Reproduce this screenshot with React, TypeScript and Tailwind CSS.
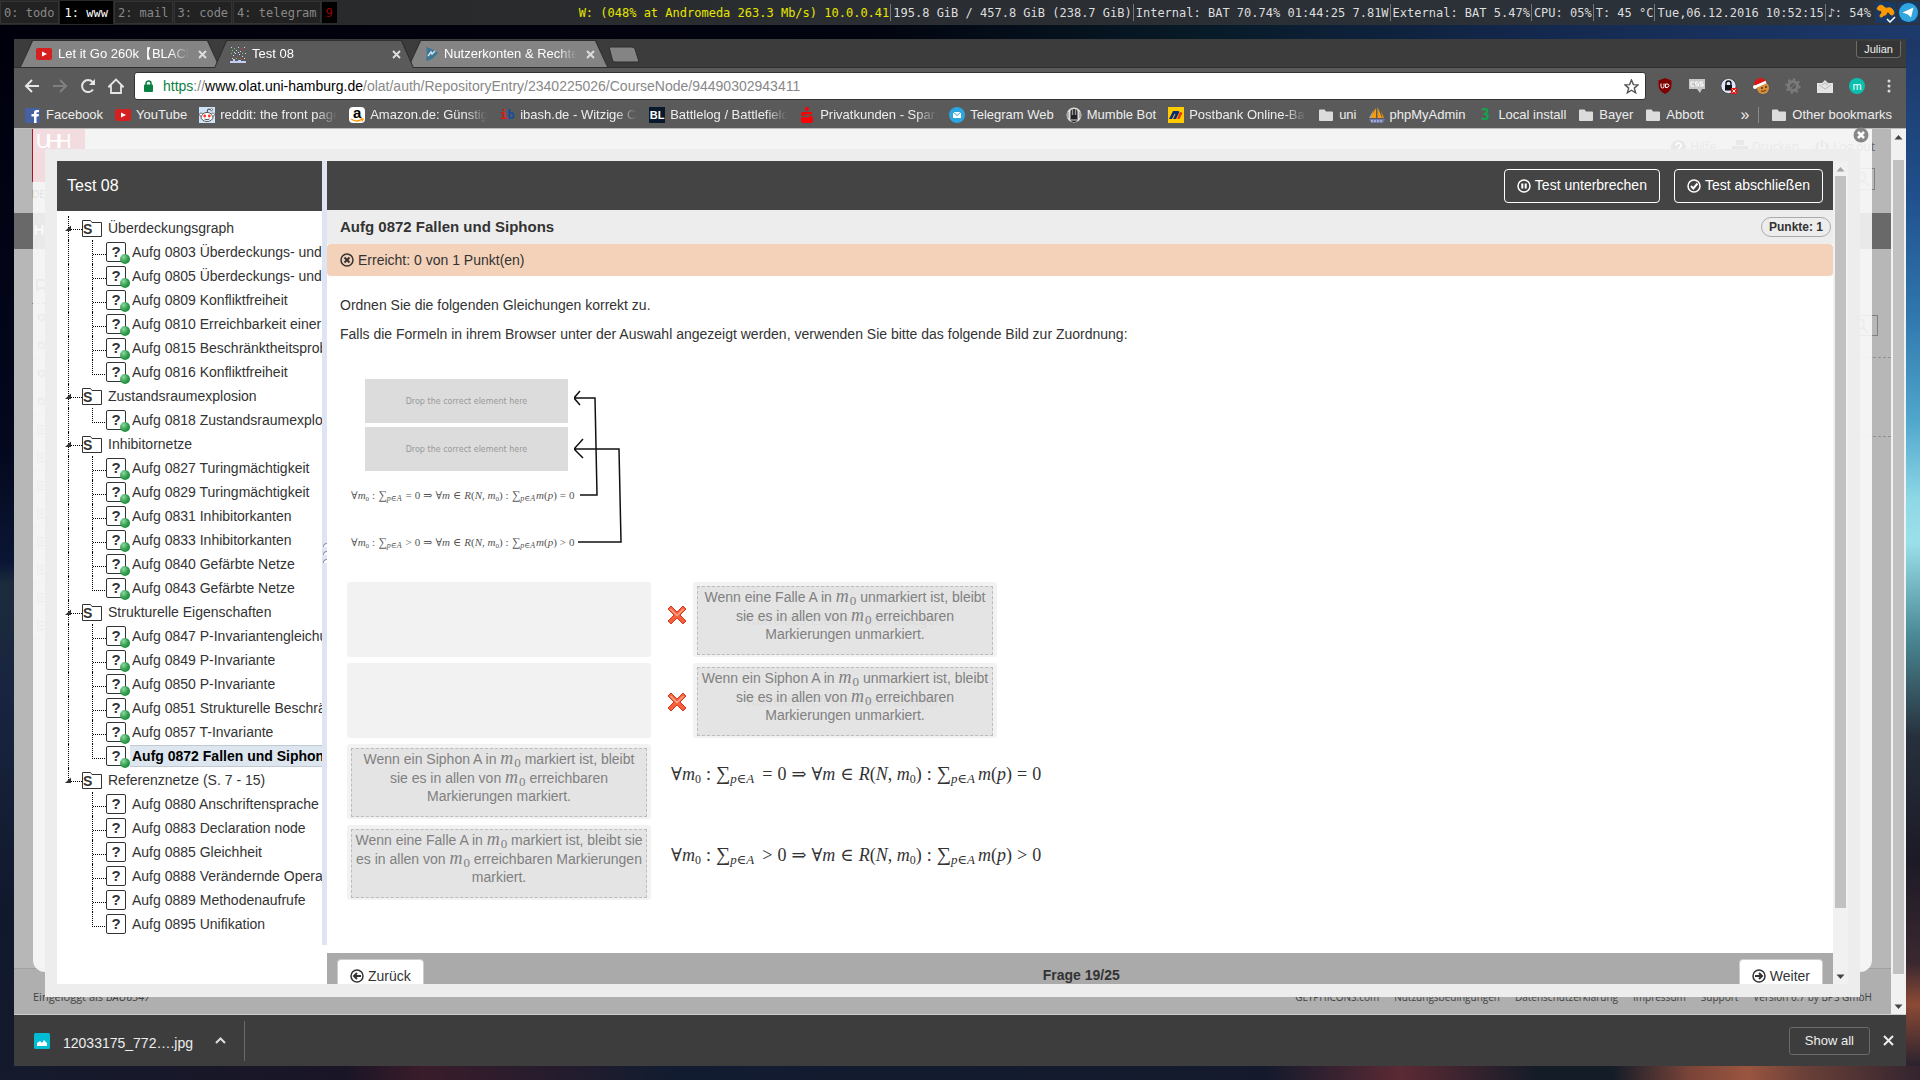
import React from "react";

const SANS = "font-['Liberation_Sans',Arial,sans-serif]";
const MONO = "font-['DejaVu_Sans_Mono',monospace]";

/* ---------- status bar ---------- */

const workspaces = [
  { label: "0: todo", active: false },
  { label: "1: www", active: true },
  { label: "2: mail", active: false },
  { label: "3: code", active: false },
  { label: "4: telegram", active: false },
];

const status = [
  "195.8 GiB / 457.8 GiB (238.7 GiB)",
  "Internal: BAT 70.74% 01:44:25 7.81W",
  "External: BAT 5.47%",
  "CPU: 05%",
  "T: 45 °C",
  "Tue,06.12.2016 10:52:15",
  "♪: 54%",
];

function StatusBar() {
  return (
    <header className={`${MONO} flex h-[25px] shrink-0 items-center justify-between bg-linear-to-r from-[#282828] to-[#2c333c] text-[12px] whitespace-pre`}>
      <nav className="flex h-full items-center gap-px">
        {workspaces.map((w) => (
          <button
            key={w.label}
            className={
              w.active
                ? "h-[23px] border border-black bg-black px-[4px] text-white"
                : "h-[23px] border border-[#333] bg-[#222] px-[3px] text-[#888]"
            }
          >
            {w.label}
          </button>
        ))}
        <button className="h-[21px] bg-black px-[4px] text-[#900]">9</button>
      </nav>
      <div className="flex h-full items-center pr-px text-[#ddd]">
        <span className="pr-px text-[#e6e600]">W: (048% at Andromeda 263.3 Mb/s) 10.0.0.41</span>
        {status.map((s) => (
          <span key={s} className="flex h-[17px] items-center border-l border-[#777] pr-px pl-[2px]">
            {s}
          </span>
        ))}
        <svg className="ml-[3px] bg-[#1a3a66]" width="21" height="21" viewBox="0 0 21 21">
          <path d="M2 7c1-4 5-5 7-2 3 3 5-1 8 2 3 3 2 6 0 6-3 0-2-3-4-3s-1 4-4 3c-1 2-4 3-4 1s2-2 2-4-3-1-5-3z" fill="#f90" stroke="#f90" />
          <path d="M12 17l3 3 5-5" fill="none" stroke="#fff" strokeWidth="1.5" />
        </svg>
        <svg className="ml-[2px]" width="21" height="21" viewBox="0 0 21 21">
          <rect width="21" height="21" fill="#1a3a66" />
          <circle cx="10.500" cy="10.500" r="9.500" fill="#31a5dd" />
          <path d="M4.500 10.500L15.500 5.500 13 15.500 10 12.500z" fill="#fff" />
        </svg>
      </div>
    </header>
  );
}

/* ---------- browser chrome ---------- */

function YouTubeIcon() {
  return (
    <svg width="16" height="16" viewBox="0 0 16 16" className="shrink-0">
      <rect y="2" width="16" height="12" rx="2" fill="#d6201f" />
      <path d="M6 5.500v5L11 8z" fill="#fff" />
    </svg>
  );
}

function TestIcon() {
  const dots = "1,1 4,2 8,1 11,2 14,1 2,4 6,4 10,5 13,4 1,7 5,7 9,8 3,9 7,10 12,10 15,7 2,12 6,12 10,12 14,12 4,6 12,7 8,6".split(" ");
  return (
    <svg width="16" height="17" viewBox="0 0 16 17" className="shrink-0">
      {dots.map((d, i) => {
        const [x, y] = d.split(",");
        return <rect key={d} x={x} y={y} width="1" height="1" fill={i % 5 === 3 ? "#e33" : i % 4 === 1 ? "#5d7" : "#ccd4ff"} />;
      })}
      <path d="M0 15h3v-2h2v2h3v-1h3v1h5v2H0z" fill="#c6cdf2" />
    </svg>
  );
}

function RsIcon() {
  return (
    <svg width="14" height="14" viewBox="0 0 14 14" className="shrink-0">
      <path d="M2 0c1 3 1 9 0 14 5-1 9-4 12-8C10 3 6 1 2 0z" fill="#3b7695" />
      <path d="M4 9l3-4 1 2 3-3" fill="none" stroke="#cfe3ee" strokeWidth="1.500" />
    </svg>
  );
}

function Tab({ title, icon, active }: { title: string; icon: React.ReactNode; active?: boolean }) {
  return (
    <div className={active ? "relative z-10 -mr-[6px] flex w-[200px] items-center" : "relative -mr-[6px] flex w-[200px] items-center"}>
      <span className="absolute inset-0 bg-[#2f2f2f] [clip-path:polygon(12px_0,calc(100%-12px)_0,100%_100%,0_100%)]" />
      <span
        className={
          active
            ? "absolute inset-x-px top-px bottom-0 bg-[#5a5a5a] [clip-path:polygon(12px_0,calc(100%-12px)_0,100%_100%,0_100%)]"
            : "absolute inset-x-px top-px bottom-px bg-[#848484] [clip-path:polygon(12px_0,calc(100%-12px)_0,100%_100%,0_100%)]"
        }
      />
      <div className="relative flex w-full items-center pr-[11px] pl-[16px]">
        {icon}
        <span className="ml-[6px] flex-1 overflow-hidden text-[13px] leading-4 whitespace-nowrap text-white [mask-image:linear-gradient(90deg,#000_85%,transparent)]">
          {title}
        </span>
        <button aria-label="Tab schließen" className="ml-[6px] flex size-[14px] items-center justify-center">
          <svg width="9" height="9" viewBox="0 0 9 9" stroke="#ddd" strokeWidth="2">
            <path d="M1 1l7 7M8 1l-7 7" />
          </svg>
        </button>
      </div>
    </div>
  );
}

function Folder() {
  return (
    <svg width="14" height="12" viewBox="0 0 14 12" className="mx-px shrink-0" fill="#dcdcdc">
      <path d="M0 1.500Q0 .500 1 .500h4.500L7 2.500h6q1 0 1 1V11q0 1-1 1H1q-1 0-1-1z" />
    </svg>
  );
}

const icons: Record<string, React.ReactNode> = {
  fb: (
    <svg width="16" height="16" viewBox="0 0 16 16">
      <rect y="1" width="15" height="15" fill="#4561a3" />
      <path d="M9 16V9.500H6.500V7H9V5.500Q9 3 11.500 3H14v2.300h-1.500q-1 0-1 1V7H14l-.400 2.500h-2.100V16z" fill="#fff" />
    </svg>
  ),
  yt: <YouTubeIcon />,
  reddit: (
    <svg width="16" height="16" viewBox="0 0 16 16">
      <rect width="16" height="16" fill="#cee3f8" />
      <ellipse cx="8" cy="10" rx="6" ry="4.500" fill="#fff" stroke="#333" strokeWidth=".800" />
      <circle cx="2" cy="7.500" r="1.500" fill="#fff" stroke="#333" strokeWidth=".600" />
      <circle cx="14" cy="7.500" r="1.500" fill="#fff" stroke="#333" strokeWidth=".600" />
      <circle cx="5.700" cy="9" r="1.400" fill="#f32" />
      <circle cx="10.300" cy="9" r="1.400" fill="#f32" />
      <path d="M8 5.500L9 2l3 .700M5.500 12q2.500 1.500 5 0" fill="none" stroke="#333" strokeWidth=".900" />
      <circle cx="12.500" cy="2.700" r="1.100" fill="#fff" stroke="#333" strokeWidth=".600" />
    </svg>
  ),
  amazon: (
    <span className="relative flex size-4 items-start justify-center rounded-sm bg-white text-[15px] leading-[11px] font-bold text-black">
      a
      <svg className="absolute bottom-0 left-0" width="16" height="5" viewBox="0 0 16 5">
        <path d="M2 1q6 4 11 0M13 3.500l1-2.500-2.500-.200" fill="none" stroke="#f90" strokeWidth="1.400" />
      </svg>
    </span>
  ),
  ibash: (
    <span className={`${MONO} flex size-4 items-center justify-center text-[12px] leading-4 font-bold`}>
      <span className="text-[#e11]">i</span>
      <span className="text-[#1450a0]">b</span>
    </span>
  ),
  bl: (
    <span className="flex size-4 items-center justify-center bg-[#08192b] text-[11px] leading-4 font-bold text-white">BL</span>
  ),
  spk: (
    <svg width="16" height="16" viewBox="0 0 16 16" fill="#f00">
      <circle cx="8" cy="2" r="2" />
      <path d="M13 5H4Q2 5 2 7t2 2h6.500v1.200H2V13q0 3 2 3h8q2 0 2-3.500T12 8.500H5.500V7.200H13z" />
    </svg>
  ),
  tg: (
    <svg width="16" height="16" viewBox="0 0 16 16">
      <circle cx="8" cy="8" r="8" fill="#2ca5e0" />
      <rect x="4" y="5" width="8" height="6" fill="#fff" />
      <path d="M4 5l4 3.500L12 5" fill="none" stroke="#2ca5e0" />
    </svg>
  ),
  mumble: (
    <svg width="16" height="16" viewBox="0 0 16 16">
      <circle cx="8" cy="8" r="7.500" fill="#ddd" />
      <rect x="4.500" y="2" width="7" height="13" rx="3" fill="#222" />
      <path d="M6.500 2v6M9.500 2v6M2 5v6M14 5v6" stroke="#999" strokeWidth="1.400" />
      <path d="M5 13h6" stroke="#ddd" />
    </svg>
  ),
  pb: (
    <svg width="16" height="16" viewBox="0 0 16 16">
      <rect width="16" height="16" fill="#fc0" />
      <path d="M1 12L5 4h5q2 0 1 2l-3 6H5l2.500-5H6.500L4 12z" fill="#0a2a7c" />
      <path d="M9 12l3-7q3 0 2 2l-2.500 5z" fill="#e30" />
    </svg>
  ),
  folder: <Folder />,
  pma: (
    <svg width="16" height="16" viewBox="0 0 16 16">
      <path d="M7 1L1 11h6zM8.500 0v11h4.500zM12 4l3 7h-1.500z" fill="#f89c0e" />
      <path d="M5 2L0 11h2z" fill="#aaa" />
      <path d="M0 12h16l-2 4H2z" fill="#6c78af" />
      <path d="M2 14h12" stroke="#ddd" strokeDasharray="2 1" />
    </svg>
  ),
  three: <span className={`${MONO} flex size-4 items-center justify-center text-[15px] leading-4 font-bold text-[#12a34c]`}>3</span>,
};

const bookmarks: { t: string; i: string; cut?: boolean }[] = [
  { t: "Facebook", i: "fb" },
  { t: "YouTube", i: "yt" },
  { t: "reddit: the front page", i: "reddit", cut: true },
  { t: "Amazon.de: Günstig", i: "amazon", cut: true },
  { t: "ibash.de - Witzige Ch", i: "ibash", cut: true },
  { t: "Battlelog / Battlefield", i: "bl", cut: true },
  { t: "Privatkunden - Spark", i: "spk", cut: true },
  { t: "Telegram Web", i: "tg" },
  { t: "Mumble Bot", i: "mumble" },
  { t: "Postbank Online-Ban", i: "pb", cut: true },
  { t: "uni", i: "folder" },
  { t: "phpMyAdmin", i: "pma" },
  { t: "Local install", i: "three" },
  { t: "Bayer", i: "folder" },
  { t: "Abbott", i: "folder" },
];

function Bookmark({ t, i, cut }: { t: string; i: string; cut?: boolean }) {
  return (
    <a href="#" className="flex shrink-0 items-center gap-[5px]">
      {icons[i]}
      <span
        className={
          cut
            ? "w-[117px] overflow-hidden whitespace-nowrap [mask-image:linear-gradient(90deg,#000_82%,transparent)]"
            : "whitespace-nowrap"
        }
      >
        {t}
      </span>
    </a>
  );
}

function Toolbar() {
  return (
    <div className="flex h-[33px] items-center pt-[3px] pl-[8px]">
      <div className="flex items-center gap-[8px] text-[#e6e6e6]">
        <button aria-label="Zurück" className="flex size-5 items-center justify-center">
          <svg width="16" height="14" viewBox="0 0 16 14" fill="none" stroke="currentColor" strokeWidth="2"><path d="M15 7H2M8 1L2 7l6 6" /></svg>
        </button>
        <button aria-label="Vorwärts" className="flex size-5 items-center justify-center text-[#808080]">
          <svg width="16" height="14" viewBox="0 0 16 14" fill="none" stroke="currentColor" strokeWidth="2"><path d="M1 7h13M8 1l6 6-6 6" /></svg>
        </button>
        <button aria-label="Neu laden" className="flex size-5 items-center justify-center">
          <svg width="16" height="16" viewBox="0 0 16 16" fill="none" stroke="currentColor" strokeWidth="2"><path d="M13 11.500A6 6 0 1 1 12.500 4L14 6" /><path d="M15 1v6H9z" fill="currentColor" stroke="none" /></svg>
        </button>
        <button aria-label="Startseite" className="flex size-5 items-center justify-center">
          <svg width="16" height="16" viewBox="0 0 16 16" fill="none" stroke="currentColor" strokeWidth="1.800"><path d="M1 8.500L8 1.500l7 7h-2V15H3V8.500z" /></svg>
        </button>
      </div>
      <div className="ml-[8px] flex h-[28px] flex-1 items-center rounded-[3px] border border-[#333] bg-white pr-[6px] pl-[9px] text-[14px]">
        <svg width="9" height="12" viewBox="0 0 9 12"><rect y="4.500" width="9" height="7.500" rx="1" fill="#0b8043" /><path d="M2 5V3.500a2.500 2.500 0 0 1 5 0V5" fill="none" stroke="#0b8043" strokeWidth="1.500" /></svg>
        <div role="textbox" aria-label="Adresse" className="ml-[10px] flex-1 whitespace-nowrap text-[#888]">
          <span className="text-[#0b8043]">https</span>://<span className="text-black">www.olat.uni-hamburg.de</span>/olat/auth/RepositoryEntry/2340225026/CourseNode/94490302943411
        </div>
        <svg width="15" height="15" viewBox="0 0 16 16" fill="none" stroke="#555" strokeWidth="1.500"><path d="M8 1l2 5 5 .300-4 3.400 1.400 5L8 12l-4.400 2.700 1.400-5-4-3.400L6 6z" /></svg>
      </div>
      <div className="ml-[11px] flex items-center gap-[16px] pr-[9px]">
        <svg width="16" height="16" viewBox="0 0 16 16"><path d="M8 0l6.500 2.500V7q0 6-6.500 9-6.500-3-6.500-9V2.500z" fill="#800000" /><path d="M4 5.500v3q0 1.500 1.500 1.500T7 8.500v-3M8.500 6v3.500H10q2-.500 2-2T10 6z" stroke="#fff" fill="none" /></svg>
        <svg width="16" height="16" viewBox="0 0 16 16"><path d="M0 1h16v10h-3l-2 4-3-4H0z" fill="#c8c8c8" /><path d="M5 4H2v4h3M9.500 4h-3v2h3v2h-3M14 4h-3v2h3v2h-3" stroke="#fff" fill="none" /></svg>
        <svg width="16" height="16" viewBox="0 0 16 16"><circle cx="7.500" cy="8" r="7" fill="#dfe6fb" stroke="#fff" /><circle cx="7.500" cy="8" r="7.500" fill="none" stroke="#234" strokeWidth=".700" /><rect x="4" y="7" width="7" height="5.500" fill="#111" /><path d="M5 7V5.500a2.500 2.500 0 0 1 5 0V7" fill="none" stroke="#111" strokeWidth="1.400" /><rect x="10" y="10" width="6" height="6" fill="#e11" /><path d="M11.500 11.500l3 3m0-3l-3 3" stroke="#fff" /></svg>
        <svg width="16" height="16" viewBox="0 0 16 16"><circle cx="10" cy="10" r="6" fill="#d9903c" /><circle cx="9" cy="10" r="1" fill="#5a2d0c" /><circle cx="13" cy="9" r="1" fill="#5a2d0c" /><path d="M8 13q3 1 5-1" stroke="#5a2d0c" fill="none" /><path d="M1 8Q1 1 7 0q5 0 6 4L4 8z" fill="#e01515" /><path d="M3 8.500L13 4" stroke="#fff" strokeWidth="2.500" /><circle cx="2" cy="9" r="2" fill="#fff" /></svg>
        <svg width="16" height="16" viewBox="0 0 16 16"><circle cx="8" cy="8" r="4.500" fill="none" stroke="#7a7a7a" strokeWidth="3" /><circle cx="8" cy="8" r="6.700" fill="none" stroke="#7a7a7a" strokeWidth="2" strokeDasharray="2.500 2.700" /><path d="M5 11l6-6" stroke="#7a7a7a" /></svg>
        <svg width="16" height="16" viewBox="0 0 16 16"><path d="M0 5h5l3-3 3 3h5v10H0z" fill="#e4e4e4" /><path d="M2 7l6 4 6-4M5 7l3-2 3 2" fill="none" stroke="#bbb" /></svg>
        <span className="flex size-4 items-center justify-center rounded-full bg-[#0bbfae] text-[11px] leading-4 text-white">m</span>
        <button aria-label="Menü" className="flex size-4 items-center justify-center"><svg width="4" height="14" viewBox="0 0 4 14" fill="#ddd"><circle cx="2" cy="2" r="1.500" /><circle cx="2" cy="7" r="1.500" /><circle cx="2" cy="12" r="1.500" /></svg></button>
      </div>
    </div>
  );
}

function Chrome() {
  return (
    <div className="shrink-0 bg-[#5a5a5a]">
      <div className="flex h-[29px] justify-between border-b border-[#2f2f2f] bg-[#3c3c3c] pt-px pl-[6px]">
        <div className="-mb-px flex">
          <Tab title="Let it Go 260k【BLACK" icon={<YouTubeIcon />} />
          <Tab title="Test 08" icon={<TestIcon />} active />
          <Tab title="Nutzerkonten & Rechte" icon={<RsIcon />} />
          <button aria-label="Neuer Tab" className="mt-[7px] ml-[6px]">
            <svg width="32" height="17" viewBox="0 0 32 17" className="-mt-[7px]"><path d="M1 1h23q2 0 3 2l4 13H7q-2 0-2.500-2z" fill="#848484" stroke="#2f2f2f" /></svg>
          </button>
        </div>
        <button className="mt-px mr-[5px] h-[17px] rounded-b-[4px] border border-t-0 border-[#6c6c6c] bg-[#353535] px-[7px] text-[11px] leading-4 text-[#eee]">Julian</button>
      </div>
      <Toolbar />
      <div className="flex h-[28px] items-center justify-between border-b border-[#bbb] pr-[14px] pl-[11px] text-[13px] text-[#eee]">
        <div className="flex items-center gap-[12px]">
          {bookmarks.map((b) => (
            <Bookmark key={b.t} {...b} />
          ))}
        </div>
        <div className="flex items-center">
          <button aria-label="Weitere Lesezeichen" className="mr-[9px] text-[16px] leading-4">»</button>
          <div className="mr-[12px] h-4 w-px bg-[#888]" />
          <Bookmark t="Other bookmarks" i="folder" />
        </div>
      </div>
    </div>
  );
}

function Scrollbar({ thumb, soft }: { thumb: string; soft?: boolean }) {
  return (
    <div className="flex w-[15px] shrink-0 flex-col items-center bg-[#f1f1f1]">
      <svg width="15" height="15" viewBox="0 0 15 15"><path d="M3.500 10.500h8l-4-4.500z" fill={soft ? "#a3a3a3" : "#444"} /></svg>
      <div className={thumb} />
      <svg className="mt-auto" width="15" height="15" viewBox="0 0 15 15"><path d="M3.500 5.500h8l-4 4.500z" fill="#444" /></svg>
    </div>
  );
}

/* ---------- dimmed page behind the dialog ---------- */

const navRows = ["o", "o", "o", "o", "+", "+", "+", "+", "+", "+", "+", "-"];

function SearchBox({ className }: { className: string }) {
  return (
    <div className={className}>
      <svg width="16" height="16" viewBox="0 0 16 16" fill="none" stroke="#909090" strokeWidth="2.500"><circle cx="6" cy="6" r="5" /><path d="M10 10l5 5" /></svg>
    </div>
  );
}

function PageBehind() {
  return (
    <div className="absolute inset-0 flex flex-col overflow-hidden bg-[#b7b7b7]">
      <div className="flex h-[84px] shrink-0 items-start justify-between pr-[16px] pl-[18px]">
        <div>
          <div className="h-[53px] w-[53px] bg-[#a81428] pl-1 text-[20px] leading-6 text-white">U<span className="-ml-1">H</span><span className="-ml-1">H</span></div>
          <div className="pt-1 font-['Open_Sans',sans-serif] text-[10px] leading-4 text-[#333]">DER FORSCHUNG</div>
        </div>
        <div className="flex flex-col items-end">
          <div className="flex h-[36px] items-center gap-[16px] font-['Open_Sans',sans-serif] text-[12px] text-[#666]">
            <span className="flex items-center gap-1"><svg width="15" height="15" viewBox="0 0 15 15"><circle cx="7.500" cy="7.500" r="7.500" fill="#666" /><path d="M5 6q0-3 2.500-3T10 6q0 1-2.500 2.500V9M7.500 10.500v2" stroke="#fff" fill="none" strokeWidth="1.500" /></svg>Hilfe</span>
            <span className="flex items-center gap-1"><svg width="16" height="14" viewBox="0 0 16 14" fill="#666"><path d="M4 0h8v5H4zM0 6h16v6H0z" /></svg>Drucken</span>
            <span className="flex items-center gap-1"><svg width="14" height="14" viewBox="0 0 14 14" fill="none" stroke="#666" strokeWidth="2"><path d="M4 2.500a5.500 5.500 0 1 0 6 0M7 0v7" /></svg>Log out</span>
          </div>
          <SearchBox className="mt-[3px] flex h-[22px] w-[200px] items-center justify-end border border-[#808080] pr-1" />
        </div>
      </div>
      <div className="h-[36px] shrink-0 bg-[#696969] pl-[20px] text-[14px] leading-[34px] text-white">Home</div>
      <div className="flex flex-1 justify-between">
        <div className="w-[280px] pt-[30px] pl-[18px]">
          <svg className="ml-1" width="12" height="13" viewBox="0 0 12 13" fill="none" stroke="#777" strokeWidth="2"><path d="M1 12V1h10v11L8 9H4z" /></svg>
          <div className="mt-[11px] border-t border-dashed border-[#808080]">
            {navRows.map((r, i) => (
              <div key={i} className="flex h-[28px] items-center border-b border-[#adadad] pl-[5px]">
                <svg width="9" height="9" viewBox="0 0 9 9" fill="none" stroke="#888">
                  {r === "o" ? <circle cx="4.500" cy="4.500" r="3" strokeWidth="2" /> : <path d={r === "+" ? "M.500.500h8v8h-8zM2 4.500h5M4.500 2v5" : "M.500.500h8v8h-8zM2 4.500h5"} />}
                </svg>
              </div>
            ))}
          </div>
        </div>
        <div className="w-[300px] pt-[66px]">
          <SearchBox className="mr-[13px] flex h-[21px] items-center justify-end border border-[#808080] pr-2" />
          <div className="mt-[21px] h-[80px] border-y border-dashed border-[#909090]" />
        </div>
      </div>
      <footer className="flex h-[46px] shrink-0 items-end justify-between border-t border-[#a0a0a0] bg-[#afafaf] px-[19px] pb-[9px] font-['Open_Sans',sans-serif] text-[11px] leading-4 text-[#444]">
        <span>Eingeloggt als <i>BAU6347</i></span>
        <div className="flex gap-[15px] text-[10px]">
          {["GLYPHICONS.com", "Nutzungsbedingungen", "Datenschutzerklärung", "Impressum", "Support", "Version 6.7 by BPS GmbH"].map((l) => (
            <a key={l} href="#">{l}</a>
          ))}
        </div>
      </footer>
    </div>
  );
}

/* ---------- test navigation tree ---------- */

const tree: { name: string; done: boolean; items: string[] }[] = [
  {
    name: "Überdeckungsgraph",
    done: true,
    items: [
      "Aufg 0803 Überdeckungs- und",
      "Aufg 0805 Überdeckungs- und",
      "Aufg 0809 Konfliktfreiheit",
      "Aufg 0810 Erreichbarkeit einer",
      "Aufg 0815 Beschränktheitsprobl",
      "Aufg 0816 Konfliktfreiheit",
    ],
  },
  { name: "Zustandsraumexplosion", done: true, items: ["Aufg 0818 Zustandsraumexplos"] },
  {
    name: "Inhibitornetze",
    done: true,
    items: [
      "Aufg 0827 Turingmächtigkeit",
      "Aufg 0829 Turingmächtigkeit",
      "Aufg 0831 Inhibitorkanten",
      "Aufg 0833 Inhibitorkanten",
      "Aufg 0840 Gefärbte Netze",
      "Aufg 0843 Gefärbte Netze",
    ],
  },
  {
    name: "Strukturelle Eigenschaften",
    done: true,
    items: [
      "Aufg 0847 P-Invariantengleichung",
      "Aufg 0849 P-Invariante",
      "Aufg 0850 P-Invariante",
      "Aufg 0851 Strukturelle Beschrän",
      "Aufg 0857 T-Invariante",
      "Aufg 0872 Fallen und Siphons",
    ],
  },
  {
    name: "Referenznetze (S. 7 - 15)",
    done: false,
    items: [
      "Aufg 0880 Anschriftensprache",
      "Aufg 0883 Declaration node",
      "Aufg 0885 Gleichheit",
      "Aufg 0888 Verändernde Operat",
      "Aufg 0889 Methodenaufrufe",
      "Aufg 0895 Unifikation",
    ],
  },
];
const CURRENT = "Aufg 0872 Fallen und Siphons";

function QuestionIcon({ done }: { done: boolean }) {
  return (
    <span className="relative flex size-5 shrink-0 items-center justify-center rounded-[2px] border border-[#333] bg-white text-[15px] leading-5 font-bold text-[#333]">
      ?
      {done && <span className="absolute -right-[5px] -bottom-[3px] size-[10px] rounded-full bg-radial-[at_35%_30%] from-[#8fd6a0] via-[#2f9e4c] to-[#13752f]" />}
    </span>
  );
}

function Tree() {
  return (
    <ul className="pt-[5px] text-[14px] leading-6 whitespace-nowrap text-[#333]">
      {tree.map((g, gi) => {
        const lastGroup = gi === tree.length - 1;
        return (
          <li key={g.name}>
            <div className="flex h-6 items-center pl-[11px]">
              <div className={lastGroup ? "h-full w-[14px] shrink-0" : "h-full w-[14px] shrink-0 border-l border-dotted border-black"}>
                <div className={lastGroup ? "h-[14px] border-b border-l border-dotted border-black" : "h-[14px] border-b border-dotted border-black"}>
                  <svg className="relative top-[9px] -left-[4px]" width="7" height="7" viewBox="0 0 7 7"><path d="M6 .500V6H0z" fill="#333" /></svg>
                </div>
              </div>
              <svg width="20" height="17" viewBox="0 0 20 17" className="shrink-0">
                <path d="M.500 16.500V.500h8l1.500 2h9.500v14z" fill="#fff" stroke="#333" />
                <text x="1" y="14" fontFamily="Liberation Sans" fontWeight="700" fontSize="14" fill="#333">S</text>
              </svg>
              <a href="#" className="ml-[6px]">{g.name}</a>
            </div>
            <ul>
              {g.items.map((it, i) => {
                const last = i === g.items.length - 1;
                return (
                  <li key={it} className="flex h-6 items-center pl-[11px]">
                    <div className={lastGroup ? "h-full w-[24px] shrink-0" : "h-full w-[24px] shrink-0 border-l border-dotted border-black"} />
                    <div className={last ? "h-full w-[14px] shrink-0" : "h-full w-[14px] shrink-0 border-l border-dotted border-black"}>
                      <div className={last ? "h-[15px] w-[13px] border-b border-l border-dotted border-black" : "h-[15px] w-[13px] border-b border-dotted border-black"} />
                    </div>
                    <QuestionIcon done={g.done} />
                    <a
                      href="#"
                      className={
                        it === CURRENT
                          ? "ml-1 h-[22px] flex-1 border-y border-[#c0cad4] bg-[#dde6ee] pl-[2px] leading-5 font-bold text-black"
                          : "ml-[6px]"
                      }
                    >
                      {it}
                    </a>
                  </li>
                );
              })}
            </ul>
          </li>
        );
      })}
    </ul>
  );
}

/* ---------- formulas ---------- */

function Op({ children, big }: { children: React.ReactNode; big: boolean }) {
  return <span className={big ? "px-[5px]" : "px-[3px]"}>{children}</span>;
}

function Sum({ big }: { big: boolean }) {
  return (
    <>
      <span className={big ? "text-[20px]" : "text-[12px]"}>∑</span>
      <sub className={big ? "mr-[3px] text-[13px]" : "mr-px text-[8px]"}>
        <i>p</i>∈<i>A</i>
      </sub>
    </>
  );
}

function Formula({ rel, big = false }: { rel: string; big?: boolean }) {
  const sub = <sub className={big ? "text-[12px]" : "text-[7px]"}>0</sub>;
  return (
    <span
      className={
        big
          ? "font-['Liberation_Serif','DejaVu_Serif',serif] text-[18px] leading-6 whitespace-nowrap text-[#333]"
          : "font-['Liberation_Serif','DejaVu_Serif',serif] text-[11px] leading-4 whitespace-nowrap text-[#555]"
      }
    >
      ∀<i>m</i>{sub}<Op big={big}>:</Op>
      <Sum big={big} />
      <Op big={big}>{rel}</Op>0<Op big={big}>⇒</Op>∀<i>m</i>
      <Op big={big}>∈</Op>
      <i>R</i>(<i>N</i>, <i>m</i>{sub})<Op big={big}>:</Op>
      <Sum big={big} />
      <i>m</i>(<i>p</i>)<Op big={big}>{rel}</Op>0
    </span>
  );
}

function M0() {
  return (
    <span className="font-['Liberation_Serif',serif] text-[18px] leading-none">
      <i className="pr-px">m</i>
      <sub className="text-[13px] leading-none">0</sub>
    </span>
  );
}

/* ---------- matching exercise ---------- */

function Slot({ children, ghost }: { children?: React.ReactNode; ghost?: boolean }) {
  return (
    <div className="h-[75px] w-[304px] rounded-[3px] bg-[#f2f2f2] p-[4px] pb-[2px]">
      {children && (
        <div className="relative h-full border border-dashed border-[#bcbcbc] bg-[#e4e4e4] text-center text-[14px] leading-[19px] text-[#808080]">
          {ghost && <span className="absolute inset-x-0 top-[24px] text-[#dcdcdc]">Korrektes Element hier ablegen</span>}
          <div className="relative">{children}</div>
        </div>
      )}
    </div>
  );
}

/* One card line; a fixed row height keeps the subscripts from stretching it. */
function Line({ children }: { children: React.ReactNode }) {
  return <div className="h-[19px] whitespace-nowrap">{children}</div>;
}

function Cross() {
  return (
    <svg width="20" height="20" viewBox="0 0 20 20">
      <path d="M1 4l3-3 6 6 6-6 3 3-6 6 6 6-3 3-6-6-6 6-3-3 6-6z" fill="#f4603c" stroke="#d8391c" strokeLinejoin="round" />
      <path d="M3.500 4L10 10.500 16.500 4" fill="none" stroke="#fba58c" strokeWidth="1.500" />
    </svg>
  );
}

function Exercise() {
  return (
    <div className="flex gap-[16px] pl-[7px]">
      <div className="flex flex-col gap-[6px]">
        <Slot />
        <Slot />
        <Slot>
          <Line>Wenn ein Siphon A in <M0 /> markiert ist, bleibt</Line>
          <Line>sie es in allen von <M0 /> erreichbaren</Line>
          <Line>Markierungen markiert.</Line>
        </Slot>
        <Slot>
          <Line>Wenn eine Falle A in <M0 /> markiert ist, bleibt sie</Line>
          <Line>es in allen von <M0 /> erreichbaren Markierungen</Line>
          <Line>markiert.</Line>
        </Slot>
      </div>
      <div className="flex flex-col gap-[6px]">
        <div className="flex gap-[6px]">
          <div className="flex flex-col gap-[67px] pt-[23px]">
            <Cross />
            <Cross />
          </div>
          <div className="flex flex-col gap-[6px]">
            <Slot ghost>
              <Line>Wenn eine Falle A in <M0 /> unmarkiert ist, bleibt</Line>
              <Line>sie es in allen von <M0 /> erreichbaren</Line>
              <Line>Markierungen unmarkiert.</Line>
            </Slot>
            <Slot ghost>
              <Line>Wenn ein Siphon A in <M0 /> unmarkiert ist, bleibt</Line>
              <Line>sie es in allen von <M0 /> erreichbaren</Line>
              <Line>Markierungen unmarkiert.</Line>
            </Slot>
          </div>
        </div>
        <div className="h-[75px] pt-[17px] pl-[4px]"><Formula rel="=" big /></div>
        <div className="h-[75px] pt-[17px] pl-[4px]"><Formula rel=">" big /></div>
      </div>
    </div>
  );
}

function Sketch() {
  return (
    <figure className="flex pt-[35px] pl-[11px]">
      <div className="flex w-[223px] flex-col">
        <div className="ml-[14px] flex flex-col gap-[4px]">
          {[0, 1].map((k) => (
            <div key={k} className="flex h-[44px] w-[203px] items-center justify-center bg-[#dcdcdc] pt-px font-['DejaVu_Sans',sans-serif] text-[8px] text-[#999]">
              Drop the correct element here
            </div>
          ))}
        </div>
        <div className="mt-[16px] flex h-4 items-center"><Formula rel="=" /></div>
        <div className="mt-[31px] flex h-4 items-center"><Formula rel=">" /></div>
      </div>
      <svg width="60" height="176" viewBox="0 0 60 176" fill="none" stroke="#111" strokeWidth="1.500">
        <path d="M6 12L0 19l6 7M0 19h21l2 97H6M9 60L0 70l9 9M0 70h45l2 93H4" />
      </svg>
    </figure>
  );
}

/* ---------- dialog ---------- */

function CircleIcon({ d }: { d: string }) {
  return (
    <svg width="14" height="14" viewBox="0 0 14 14" fill="none" stroke="currentColor" strokeWidth="1.500" className="shrink-0">
      <circle cx="7" cy="7" r="6" />
      <path d={d} strokeWidth="2" />
    </svg>
  );
}

const headerButton = "flex h-[34px] items-center gap-[4px] rounded-[4px] border border-white px-[12px] text-[14px] text-white";
const footerButton = "flex h-[34px] shrink-0 items-center gap-[4px] rounded-[4px] border border-[#ccc] bg-white px-[12px] text-[14px] text-[#333]";

function Dialog() {
  return (
    <div className="absolute top-[20px] right-[12px] -bottom-[25px] left-[12px] flex bg-[#ededed] px-[12px] pt-[12px] pb-[13px]">
      <div className="flex min-w-0 flex-1 overflow-hidden bg-white">
        <aside className="w-[265px] shrink-0 overflow-hidden">
          <h1 className="h-[50px] bg-[#444] pl-[10px] text-[16px] leading-[49px] text-white">Test 08</h1>
          <Tree />
        </aside>
        <div className="mb-[39px] flex w-[5px] shrink-0 flex-col items-center justify-center gap-[4px] bg-[#dfe4f2]">
          {[0, 1, 2].map((k) => (
            <span key={k} className="size-[4px] rounded-tl-full border-t border-l border-[#7f93b5] bg-white" />
          ))}
        </div>
        <section className="flex min-w-0 flex-1 flex-col text-[14px] text-[#333]">
          <div className="flex h-[49px] shrink-0 items-center justify-end gap-[14px] bg-[#444] pr-[10px]">
            <button className={headerButton}><CircleIcon d="M5.300 4.500v5M8.700 4.500v5" />Test unterbrechen</button>
            <button className={headerButton}><CircleIcon d="M4 7l2.300 2.500L10.500 4.500" />Test abschließen</button>
          </div>
          <div className="flex h-[34px] shrink-0 items-center justify-between bg-[#ededed] pr-[2px] pl-[13px]">
            <h2 className="text-[15px] font-bold">Aufg 0872 Fallen und Siphons</h2>
            <span className="rounded-full border border-[#aaa] px-[7px] text-[12px] leading-[18px] font-bold">Punkte: 1</span>
          </div>
          <div role="alert" className="flex h-[32px] shrink-0 items-center gap-[4px] rounded-[4px] bg-[#f4d1b9] pl-[13px]">
            <CircleIcon d="M4.500 4.500l5 5M9.500 4.500l-5 5" />
            Erreicht: 0 von 1 Punkt(en)
          </div>
          <div className="min-h-0 flex-1 overflow-hidden pt-[19px] pl-[13px] leading-5">
            <p className="mb-[9px]">Ordnen Sie die folgenden Gleichungen korrekt zu.</p>
            <p>Falls die Formeln in ihrem Browser unter der Auswahl angezeigt werden, verwenden Sie bitte das folgende Bild zur Zuordnung:</p>
            <Sketch />
            <div className="mt-[27px]"><Exercise /></div>
          </div>
          <div className="flex h-[31px] shrink-0 items-start justify-between overflow-hidden bg-[#aaa] px-[10px] pt-[6px]">
            <button className={footerButton}><CircleIcon d="M11 7H4M7 4L4 7l3 3" />Zurück</button>
            <b className="leading-[33px]">Frage 19/25</b>
            <button className={footerButton}><CircleIcon d="M3 7h7M7 4l3 3-3 3" />Weiter</button>
          </div>
        </section>
        <Scrollbar thumb="h-[89%] w-[11px] bg-[#c1c1c1]" soft />
      </div>
    </div>
  );
}

function DownloadBar() {
  return (
    <footer className="flex h-[52px] shrink-0 items-center justify-between border-t border-[#ccc] bg-[#3d3d3d] pr-[10px] pl-[20px] text-[#eee]">
      <div className="flex h-full items-center">
        <svg width="16" height="16" viewBox="0 0 16 16"><rect width="16" height="16" rx="1.500" fill="#00bcd4" /><path d="M3 13v-3l3-2 2 2 2-3 3 3v3z" fill="#fff" /></svg>
        <span className="ml-[13px] pt-[6px] text-[14px]">12033175_772….jpg</span>
        <button aria-label="Optionen" className="ml-[22px]"><svg width="11" height="7" viewBox="0 0 11 7" fill="none" stroke="#ddd" strokeWidth="2"><path d="M1 6l4.500-4.500L10 6" /></svg></button>
        <div className="ml-[18px] h-[40px] w-px bg-[#6a6a6a]" />
      </div>
      <div className="flex items-center">
        <button className="h-[28px] rounded-[3px] border border-[#6a6a6a] px-[15px] text-[13px]">Show all</button>
        <button aria-label="Schließen" className="ml-[10px] flex size-4 items-center justify-center"><svg width="11" height="11" viewBox="0 0 11 11" stroke="#eee" strokeWidth="2"><path d="M1 1l9 9M10 1l-9 9" /></svg></button>
      </div>
    </footer>
  );
}

export default function App() {
  return (
    <div className={`${SANS} flex h-screen flex-col overflow-hidden bg-[#000010]`}>
      <StatusBar />
      <div className="h-[14px] shrink-0 bg-[linear-gradient(90deg,#00000c_0%,#02040f_45%,#071a26_62%,#12264a_78%,#1d3a6c_100%)]" />
      <div className="flex min-h-0 flex-1">
        <div className="w-[14px] shrink-0 bg-[linear-gradient(180deg,#00000c_0%,#04081e_40%,#0a1634_51%,#1c2b3c_53%,#182440_64%,#10182c_85%,#141a2c_100%)]" />
        <main className="flex min-w-0 flex-1 flex-col">
          <Chrome />
          <div className="flex min-h-0 flex-1">
            <div className="relative flex min-w-0 flex-1">
              <PageBehind />
              <div className="relative mx-[19px] mb-[42px] flex-1 rounded-b-[12px] bg-white/85">
                <Dialog />
                <button aria-label="Dialog schließen" className="absolute -top-[2px] right-[3px]">
                  <svg width="16" height="16" viewBox="0 0 16 16"><circle cx="8" cy="8" r="7.500" fill="#888" /><path d="M5 5l6 6M11 5l-6 6" stroke="#fff" strokeWidth="2.500" /></svg>
                </button>
              </div>
            </div>
            <Scrollbar thumb="mt-[16px] h-[92%] w-[11px] bg-[#c1c1c1]" />
          </div>
          <DownloadBar />
        </main>
        <div className="w-[14px] shrink-0 bg-[linear-gradient(180deg,#1d3766_0%,#1f4f8c_15%,#3077ae_27%,#4fa6cc_37%,#8fd8e6_45%,#9ae0ea_49%,#4a8a96_58%,#26303c_68%,#1c1a26_80%,#3a2830_90%,#8c4a34_94%,#2a222e_100%)]" />
      </div>
      <div className="h-[14px] shrink-0 bg-[linear-gradient(90deg,#141a2c_0%,#1a1526_18%,#3a1c2a_22%,#121c30_35%,#141a2c_66%,#5c2a34_73%,#141c28_80%,#141c28_84%,#7a4438_88%,#9a5540_91%,#6a4038_94%,#33242e_100%)]" />
    </div>
  );
}
